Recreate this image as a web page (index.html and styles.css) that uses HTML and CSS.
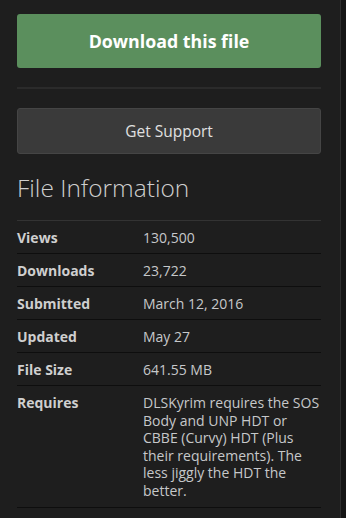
FILE: index.html
```html
<!DOCTYPE html>
<html lang="en">

<head>
    <meta charset="UTF-8">
    <meta name="viewport" content="width=device-width, initial-scale=1.0">
    <title>File Information</title>
    <link rel="stylesheet" href="styles.css">
</head>

<body>
    <div class="sidebar">
        <a class="btn btn-download" href="#">Download this file</a>

        <hr class="divider">

        <a class="btn btn-support" href="#">Get Support</a>

        <h2>File Information</h2>

        <table class="file-info">
            <tbody>
                <tr>
                    <th>Views</th>
                    <td>130,500</td>
                </tr>
                <tr>
                    <th>Downloads</th>
                    <td>23,722</td>
                </tr>
                <tr>
                    <th>Submitted</th>
                    <td>March 12, 2016</td>
                </tr>
                <tr>
                    <th>Updated</th>
                    <td>May 27</td>
                </tr>
                <tr>
                    <th>File Size</th>
                    <td>641.55 MB</td>
                </tr>
                <tr class="long">
                    <th>Requires</th>
                    <td>DLSKyrim requires the SOS<br>Body and UNP HDT or<br>CBBE (Curvy) HDT (Plus<br>their requirements). The<br>less jiggly the HDT the<br>better.</td>
                </tr>
            </tbody>
        </table>
    </div>
</body>

</html>
```

FILE: styles.css
```css
body {
    font-family: "Open Sans", sans-serif;
    background-color: #151515;
    margin: 0;
    padding: 0;
    color: #c8c8c8;
}

.sidebar {
    width: 304px;
    min-height: 518px;
    padding: 14px 19px 0 17px;
    background-color: #1e1e1e;
    border-right: 1px solid #2e2e2e;
}

.btn {
    display: block;
    text-align: center;
    text-decoration: none;
    border-radius: 3px;
}

.btn-download {
    height: 54px;
    line-height: 54px;
    background-color: #5b8f5d;
    color: #fff;
    font-size: 17.8px;
    font-weight: bold;
}

.divider {
    margin: 19px 0 19px 0;
    border: none;
    border-top: 2px solid #2b2b2b;
}

.btn-support {
    height: 44px;
    line-height: 45px;
    background-color: #3a3a3a;
    border: 1px solid #454545;
    color: #e0e0e0;
    font-size: 15.5px;
}

h2 {
    margin: 20px 0 18px 0;
    font-size: 24.5px;
    font-weight: 300;
    color: #cfcfcf;
    line-height: 28px;
}

.file-info {
    width: 100%;
    border-collapse: collapse;
    border-top: 1px solid #333;
}

.file-info th,
.file-info td {
    padding: 8px 0 6.5px 0;
    text-align: left;
    vertical-align: top;
    font-size: 14px;
    line-height: 17.5px;
    border-bottom: 1px solid #0e0e0e;
}

.file-info .long th,
.file-info .long td {
    padding-bottom: 8px;
}

.file-info th {
    width: 126px;
    font-weight: bold;
    color: #cfcfcf;
}

.file-info td {
    color: #c6c8ca;
}
```
